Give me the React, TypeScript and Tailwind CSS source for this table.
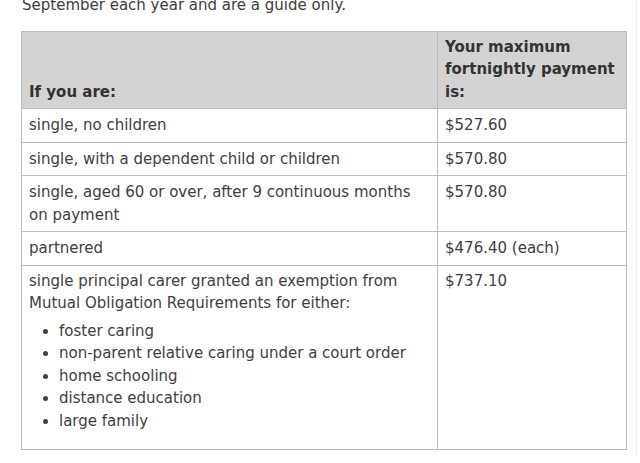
import React from "react";

const rows: { label: React.ReactNode; amount: string }[] = [
  { label: "single, no children", amount: "$527.60" },
  { label: "single, with a dependent child or children", amount: "$570.80" },
  {
    label: "single, aged 60 or over, after 9 continuous months on payment",
    amount: "$570.80",
  },
  { label: "partnered", amount: "$476.40 (each)" },
];

const carerReasons = [
  "foster caring",
  "non-parent relative caring under a court order",
  "home schooling",
  "distance education",
  "large family",
];

export default function App() {
  return (
    <div className="h-[463px] w-[640px] overflow-hidden bg-white font-['DejaVu_Sans',Verdana,sans-serif] text-[15px] leading-[22.5px] text-[#404040]">
      <div className="h-full border-r border-[#f0f0f0] pl-[22px] pr-[12px] w-[637px]">
        <p className="-mt-[6px]">September each year and are a guide only.</p>
        <table className="mt-[14px] w-[606px] -ml-px border-collapse border border-[#bcbcbc]">
          <thead>
            <tr className="bg-[#d3d3d3]">
              <th className="w-[416px] border border-[#bcbcbc] px-[7px] pt-[4px] pb-[5px] text-left align-bottom font-bold text-[#333]">
                If you are:
              </th>
              <th className="border border-[#bcbcbc] px-[7px] pt-[4px] pb-[5px] text-left align-bottom font-bold text-[#333]">
                Your maximum fortnightly payment is:
              </th>
            </tr>
          </thead>
          <tbody>
            {rows.map((r, i) => (
              <tr key={i}>
                <td className="border border-[#bcbcbc] px-[7px] pt-[5px] pb-[5px] align-top">
                  {r.label}
                </td>
                <td className="border border-[#bcbcbc] px-[7px] pt-[5px] pb-[5px] align-top">
                  {r.amount}
                </td>
              </tr>
            ))}
            <tr>
              <td className="border border-[#bcbcbc] px-[7px] pt-[4px] pb-[17px] align-top">
                single principal carer granted an exemption from Mutual
                Obligation Requirements for either:
                <ul className="mt-[5px] list-disc pl-[30px]">
                  {carerReasons.map((c) => (
                    <li key={c}>{c}</li>
                  ))}
                </ul>
              </td>
              <td className="border border-[#bcbcbc] px-[7px] pt-[4px] align-top">
                $737.10
              </td>
            </tr>
          </tbody>
        </table>
      </div>
    </div>
  );
}
